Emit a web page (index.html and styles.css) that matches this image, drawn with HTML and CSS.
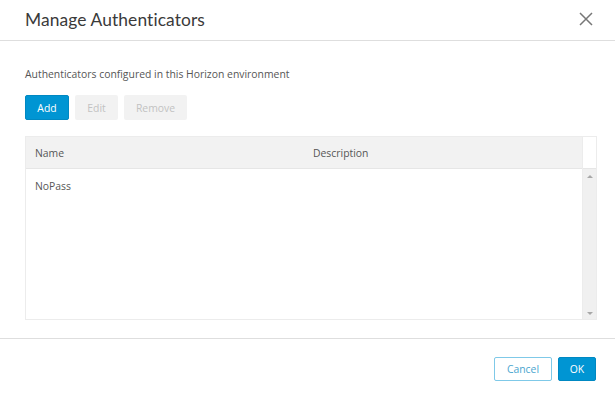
FILE: index.html
```html
<!DOCTYPE html>
<html lang="en">
<head>
    <meta charset="UTF-8">
    <title>Manage Authenticators</title>
    <link rel="stylesheet" href="styles.css">
</head>
<body>
    <div class="modal">
        <!-- Header -->
        <div class="modal-header">
            <span class="modal-title">Manage Authenticators</span>
            <svg class="close" width="14" height="14" viewBox="0 0 14 14">
                <path d="M1 1 L13 13 M13 1 L1 13" stroke="#777" stroke-width="1.5" fill="none"/>
            </svg>
        </div>

        <!-- Body -->
        <div class="modal-body">
            <p class="intro">Authenticators configured in this Horizon environment</p>
            <div class="toolbar">
                <button class="btn btn-primary btn-add">Add</button>
                <button class="btn btn-disabled btn-edit">Edit</button>
                <button class="btn btn-disabled btn-remove">Remove</button>
            </div>

            <div class="grid">
                <div class="grid-main">
                    <div class="grid-head">
                        <div class="cell col-name">Name</div>
                        <div class="cell col-desc">Description</div>
                    </div>
                    <div class="grid-body">
                        <div class="grid-row">
                            <div class="cell col-name">NoPass</div>
                            <div class="cell col-desc"></div>
                        </div>
                    </div>
                </div>
                <div class="scrollbar">
                    <div class="scroll-corner"></div>
                    <div class="scroll-track">
                        <span class="arrow-up"></span>
                        <span class="arrow-down"></span>
                    </div>
                </div>
            </div>
        </div>

        <!-- Footer -->
        <div class="modal-footer">
            <button class="btn btn-outline">Cancel</button>
            <button class="btn btn-primary btn-ok">OK</button>
        </div>
    </div>
</body>
</html>
```

FILE: styles.css
```css
/* Reset */
* { margin: 0; padding: 0; box-sizing: border-box; }

body {
    font-family: 'Open Sans', sans-serif;
    font-size: 10.4px;
    color: #565656;
    background: #ffffff;
    width: 615px;
    height: 396px;
    overflow: hidden;
}

.modal {
    display: flex;
    flex-direction: column;
}

/* Header */
.modal-header {
    height: 41px;
    display: flex;
    align-items: center;
    justify-content: space-between;
    padding: 0 22px 2px 25px;
    border-bottom: 1px solid #dedede;
}

.modal-title {
    font-family: 'Lato', sans-serif;
    font-size: 17.4px;
    color: #3a3a3a;
    letter-spacing: 0.1px;
}

.close {
    display: block;
}

/* Body */
.modal-body {
    padding: 25px 18px 0 25px;
}

.intro {
    line-height: 16px;
    color: #565656;
}

.toolbar {
    display: flex;
    gap: 6px;
    margin-top: 13px;
}

.btn {
    font-family: 'Open Sans', sans-serif;
    font-size: 10.4px;
    height: 25px;
    border: 1px solid transparent;
    border-radius: 2px;
    padding: 0;
    cursor: pointer;
}

.btn-primary {
    background: #0095d3;
    border-color: #0088c2;
    color: #ffffff;
}

.btn-disabled {
    background: #f2f2f2;
    color: #c2c2c2;
}

.btn-add { width: 44px; }
.btn-edit { width: 43px; }
.btn-remove { width: 63px; }

.btn-outline {
    background: #ffffff;
    border-color: #7fc9e8;
    color: #4ba6cf;
    width: 58px;
    height: 24px;
}

.btn-ok {
    width: 38px;
    height: 24px;
}

/* Grid */
.grid {
    display: flex;
    margin-top: 16px;
    height: 184px;
    border: 1px solid #ececec;
}

.grid-main {
    flex: 1;
    display: flex;
    flex-direction: column;
}

.grid-head {
    display: flex;
    height: 32px;
    background: #f2f2f2;
    border-bottom: 1px solid #e6e6e6;
    align-items: center;
}

.grid-row {
    display: flex;
    height: 34px;
    align-items: center;
}

.cell {
    padding-left: 9px;
}

.col-name {
    width: 278px;
}

.col-desc {
    flex: 1;
}

/* Scrollbar */
.scrollbar {
    width: 14px;
    display: flex;
    flex-direction: column;
    border-left: 1px solid #ececec;
}

.scroll-corner {
    height: 32px;
    border-bottom: 1px solid #e6e6e6;
    background: #ffffff;
}

.scroll-track {
    flex: 1;
    background: #f0f0f0;
    display: flex;
    flex-direction: column;
    justify-content: space-between;
    align-items: center;
    padding: 6px 0 4px;
}

.arrow-up {
    width: 0;
    height: 0;
    border-left: 3px solid transparent;
    border-right: 3px solid transparent;
    border-bottom: 3px solid #a8a8a8;
}

.arrow-down {
    width: 0;
    height: 0;
    border-left: 3px solid transparent;
    border-right: 3px solid transparent;
    border-top: 3px solid #a8a8a8;
}

/* Footer */
.modal-footer {
    margin-top: 18px;
    border-top: 1px solid #dedede;
    display: flex;
    justify-content: flex-end;
    gap: 6px;
    padding: 18px 19px 0 0;
}
```
